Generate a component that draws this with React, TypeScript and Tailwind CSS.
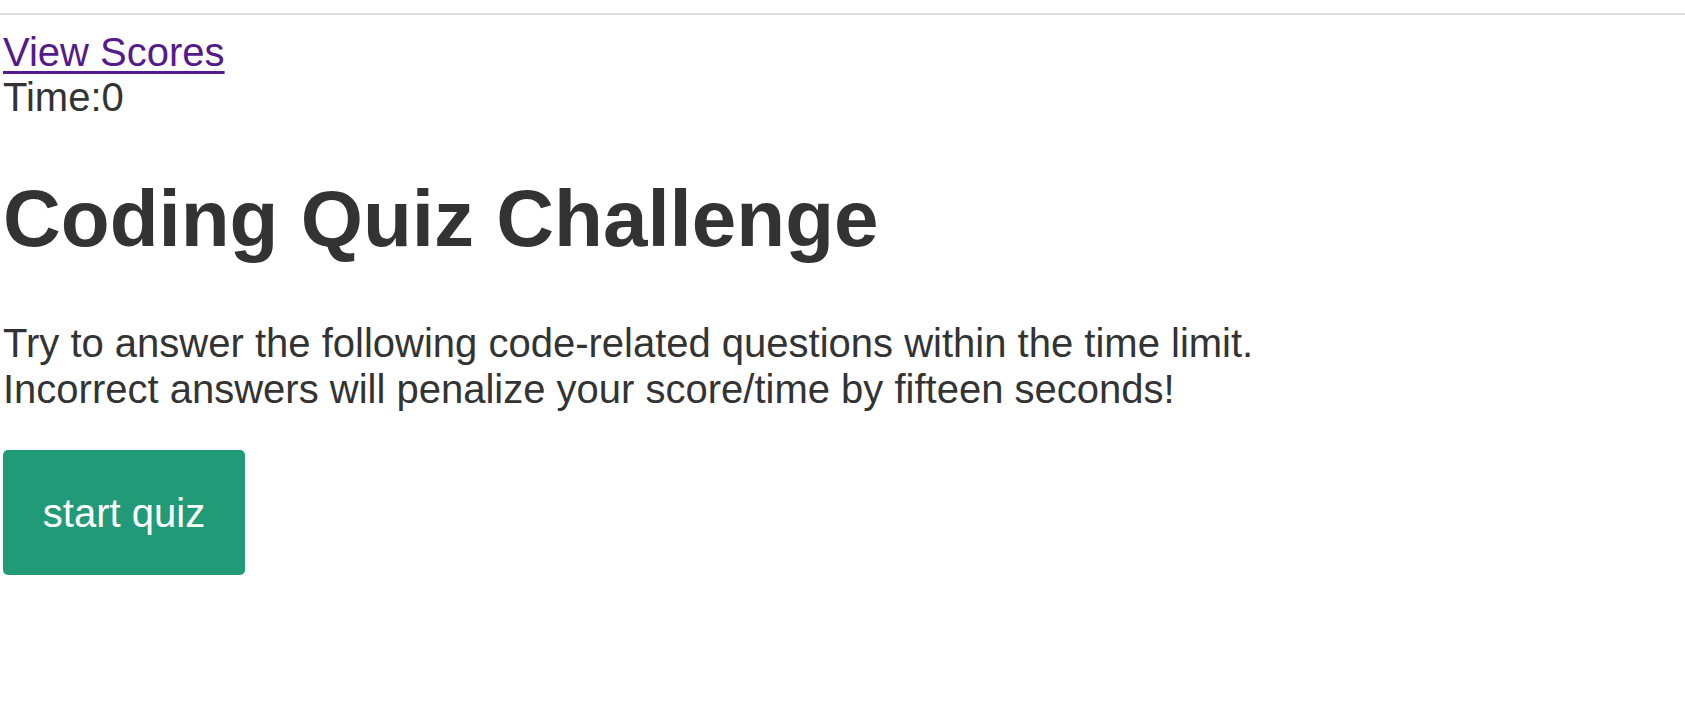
import React from "react";

export default function App() {
  return (
    <div
      className="min-h-[708px] bg-white text-[#333333]"
      style={{ fontFamily: '"Liberation Sans", Arial, Helvetica, sans-serif' }}
    >
      <div className="h-[15px] border-b-2 border-[#dddddd]" />
      <div className="pl-[3px] pt-[14px]">
        <a
          href="#"
          className="block w-fit text-[40px] leading-[46px] text-[#551a8b] underline decoration-[3px] underline-offset-[5px]"
        >
          View Scores
        </a>
        <div className="text-[40px] leading-[45px]">Time:0</div>
        <h1 className="mt-[53px] text-[80px] font-bold leading-[92px]">
          Coding Quiz Challenge
        </h1>
        <p className="mt-[55px] text-[40px] leading-[46px]">
          Try to answer the following code-related questions within the time limit.
          <br />
          Incorrect answers will penalize your score/time by fifteen seconds!
        </p>
        <button
          type="button"
          className="mt-[38px] flex h-[125px] w-[242px] items-center justify-center rounded-[5px] bg-[#219b77] text-[40px] leading-[46px] text-white"
        >
          start quiz
        </button>
      </div>
    </div>
  );
}
